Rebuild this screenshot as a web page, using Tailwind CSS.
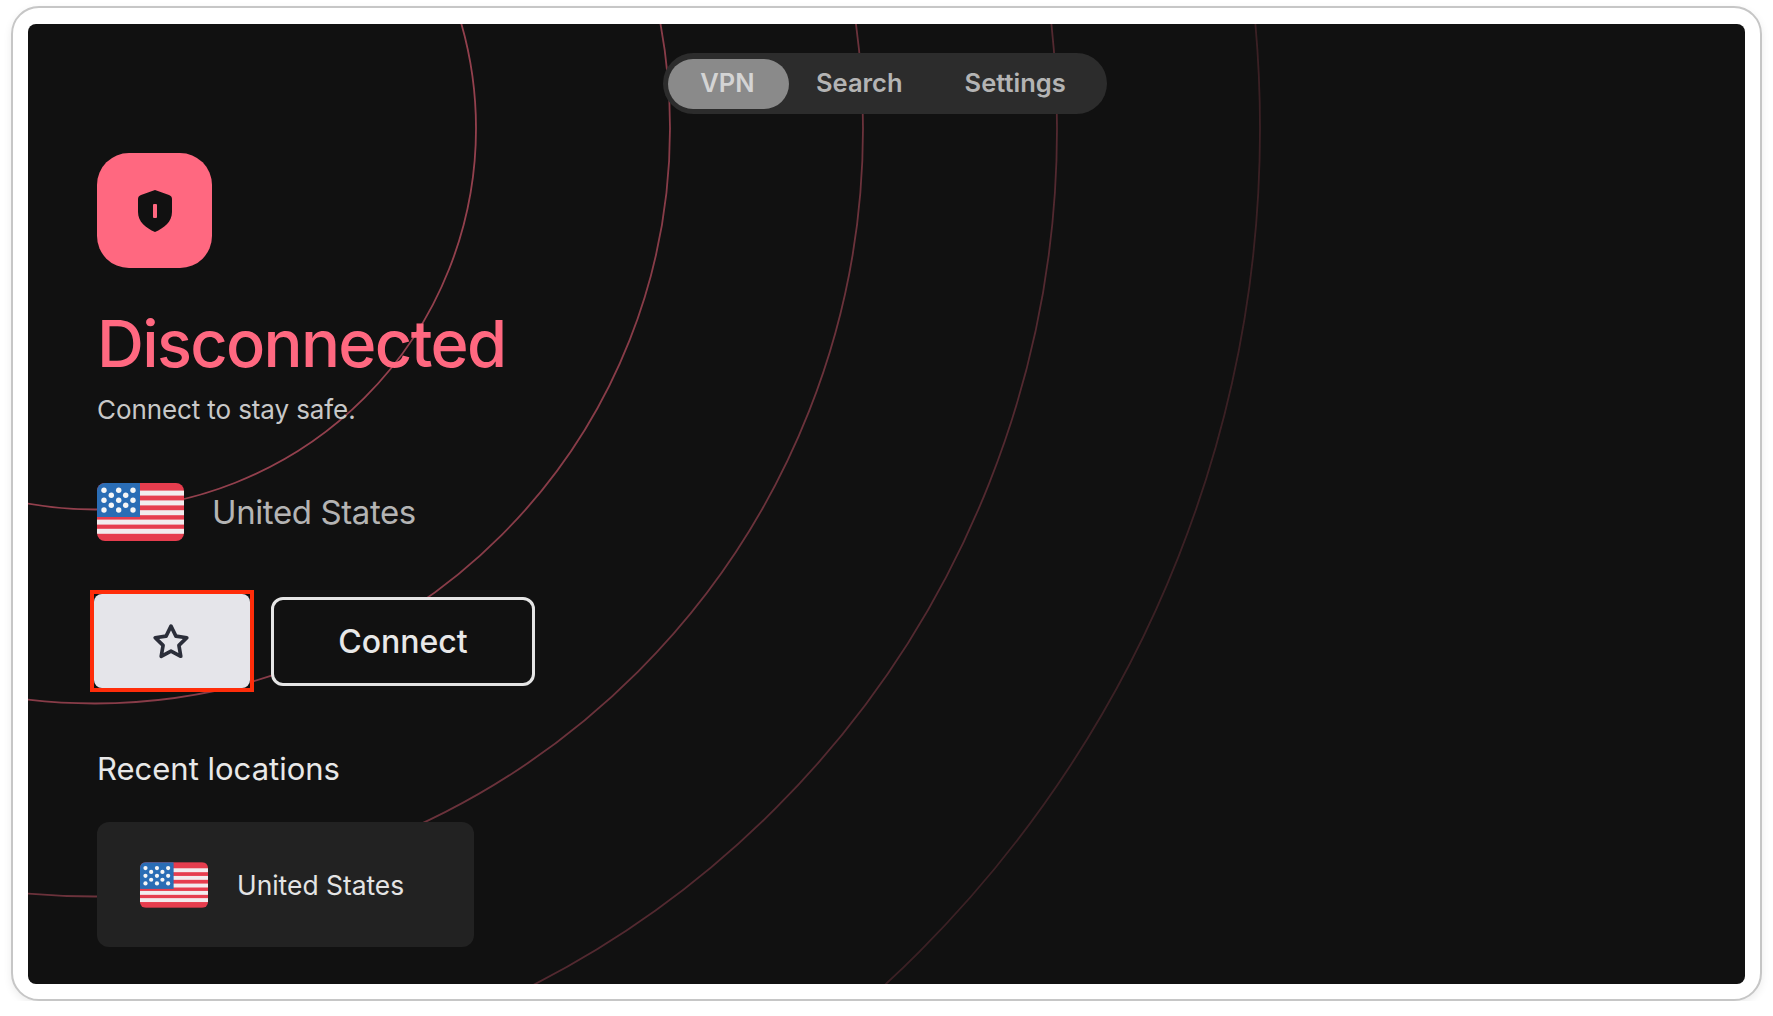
<!doctype html>
<html lang="en">
  <head>
    <meta charset="utf-8" />
    <meta name="viewport" content="width=device-width, initial-scale=1" />
    <script src="https://cdn.jsdelivr.net/npm/@tailwindcss/browser@4"></script>
    <title>VPN</title>
  </head>
  <body class="bg-white font-['Inter',sans-serif]">
    <!-- shared flag -->
    <svg width="0" height="0" class="absolute">
      <symbol id="us-flag" viewBox="0 0 87 58">
        <rect width="87" height="58" fill="#e63d4e" />
        <rect y="7.6" width="87" height="5" fill="#f2ecee" />
        <rect y="17.4" width="87" height="5" fill="#f2ecee" />
        <rect y="27.2" width="87" height="5" fill="#f2ecee" />
        <rect y="36.6" width="87" height="5" fill="#f2ecee" />
        <rect y="45.8" width="87" height="5" fill="#f2ecee" />
        <rect width="43" height="34" fill="#2a6db5" />
        <g fill="#f6f6f6">
          <circle cx="7" cy="7.3" r="2.7" /><circle cx="21.7" cy="7.3" r="2.7" /><circle cx="36" cy="7.3" r="2.7" />
          <circle cx="14.3" cy="12.3" r="2.7" /><circle cx="28.7" cy="12.3" r="2.7" />
          <circle cx="7" cy="17.3" r="2.7" /><circle cx="21.7" cy="17.3" r="2.7" /><circle cx="36" cy="17.3" r="2.7" />
          <circle cx="14.3" cy="22.3" r="2.7" /><circle cx="28.7" cy="22.3" r="2.7" />
          <circle cx="7" cy="27" r="2.7" /><circle cx="21.7" cy="27" r="2.7" /><circle cx="36" cy="27" r="2.7" />
        </g>
      </symbol>
    </svg>

    <div class="ml-[11px] mt-[6px] w-[1751px] h-[995px] rounded-[28px] border-2 border-[#c6c6c6] bg-white p-[15px] pt-[16px] shadow-[0_3px_8px_rgba(0,0,0,0.08)]">
      <div class="relative h-full overflow-hidden rounded-[8px] bg-[#111111]">
        <!-- rings behind everything -->
        <svg class="absolute inset-0 h-full w-full" fill="none" stroke="#ff6880">
          <circle cx="67" cy="104.5" r="381" stroke-width="1.8" stroke-opacity="0.55" />
          <circle cx="67" cy="104.5" r="575" stroke-width="1.8" stroke-opacity="0.5" />
          <circle cx="67" cy="104.5" r="768" stroke-width="1.8" stroke-opacity="0.38" />
          <circle cx="67" cy="104.5" r="962" stroke-width="1.8" stroke-opacity="0.28" />
          <circle cx="67" cy="104.5" r="1165" stroke-width="1.8" stroke-opacity="0.18" />
        </svg>

        <div class="relative flex flex-col">
          <nav class="mt-[29px] flex justify-center pr-[3px]">
            <div class="flex h-[61px] w-[444px] items-center rounded-full bg-[#2c2c2c] pl-[5px] text-[25.5px] font-semibold text-[#b4b4b4]">
              <a class="flex h-[50px] w-[121px] items-center justify-center rounded-full bg-[#8a8a8a] pr-[2px] text-[#d4d4d4]">VPN</a>
              <a class="ml-[27px]">Search</a>
              <a class="ml-[62px]">Settings</a>
            </div>
          </nav>

          <div class="flex flex-col items-start pl-[69px]">
            <div class="mt-[39px] flex h-[115px] w-[115px] items-center justify-center rounded-[32px] bg-[#ff6880]">
              <svg width="34" height="42" viewBox="0 0 34 42">
                <path fill="#111111" d="M17 0 L31 5 Q34 6 34 9 V22 C34 32 26 38 17 42 C8 38 0 32 0 22 V9 Q0 6 3 5 Z" />
                <rect x="15" y="14" width="4" height="14" rx="1" fill="#ff6880" />
              </svg>
            </div>

            <h1 class="mt-[36px] text-[65px] leading-[80px] font-medium tracking-[-1.7px] text-[#ff6880]">Disconnected</h1>
            <p class="mt-[10px] text-[26px] leading-[32px] tracking-[-0.1px] text-[#c8c8c8]">Connect to stay safe.</p>

            <div class="mt-[57px] flex items-center">
              <svg class="h-[58px] w-[87px] rounded-[8px]"><use href="#us-flag" /></svg>
              <span class="ml-[28px] text-[33px] leading-[40px] tracking-[-0.4px] text-[#b4b4b4]">United States</span>
            </div>

            <div class="mt-[49px] flex items-center">
              <button class="-ml-[7px] flex h-[102px] w-[164px] items-center justify-center border-4 border-[#ff2d0a] bg-[#111111]">
                <span class="flex h-full w-full items-center justify-center rounded-[8px] bg-[#e5e5ea] pt-[2px] pr-[3px]">
                  <svg width="38" height="38" viewBox="0 0 24 24" fill="none" stroke="#2b2e3a" stroke-width="2.3" stroke-linejoin="round">
                    <path d="M12 2l3.09 6.26L22 9.27l-5 4.87 1.18 6.88L12 17.77l-6.18 3.25L7 14.14 2 9.27l6.91-1.01L12 2z" />
                  </svg>
                </span>
              </button>
              <button class="ml-[17px] h-[89px] w-[264px] rounded-[12px] border-[3px] border-[#e5e5e5] bg-[#111111] pt-[2px] text-[32px] font-medium text-[#e8e8e8]">Connect</button>
            </div>

            <h2 class="mt-[57px] text-[31px] leading-[40px] text-[#e8e8e8]">Recent locations</h2>

            <div class="mt-[33px] flex h-[125px] w-[377px] items-center rounded-[12px] bg-[#222222] pl-[43px]">
              <svg class="h-[46px] w-[68px] rounded-[6px]"><use href="#us-flag" /></svg>
              <span class="ml-[29px] text-[26.4px] leading-[34px] text-[#e4e4e4]">United States</span>
            </div>
          </div>
        </div>
      </div>
    </div>
  </body>
</html>
